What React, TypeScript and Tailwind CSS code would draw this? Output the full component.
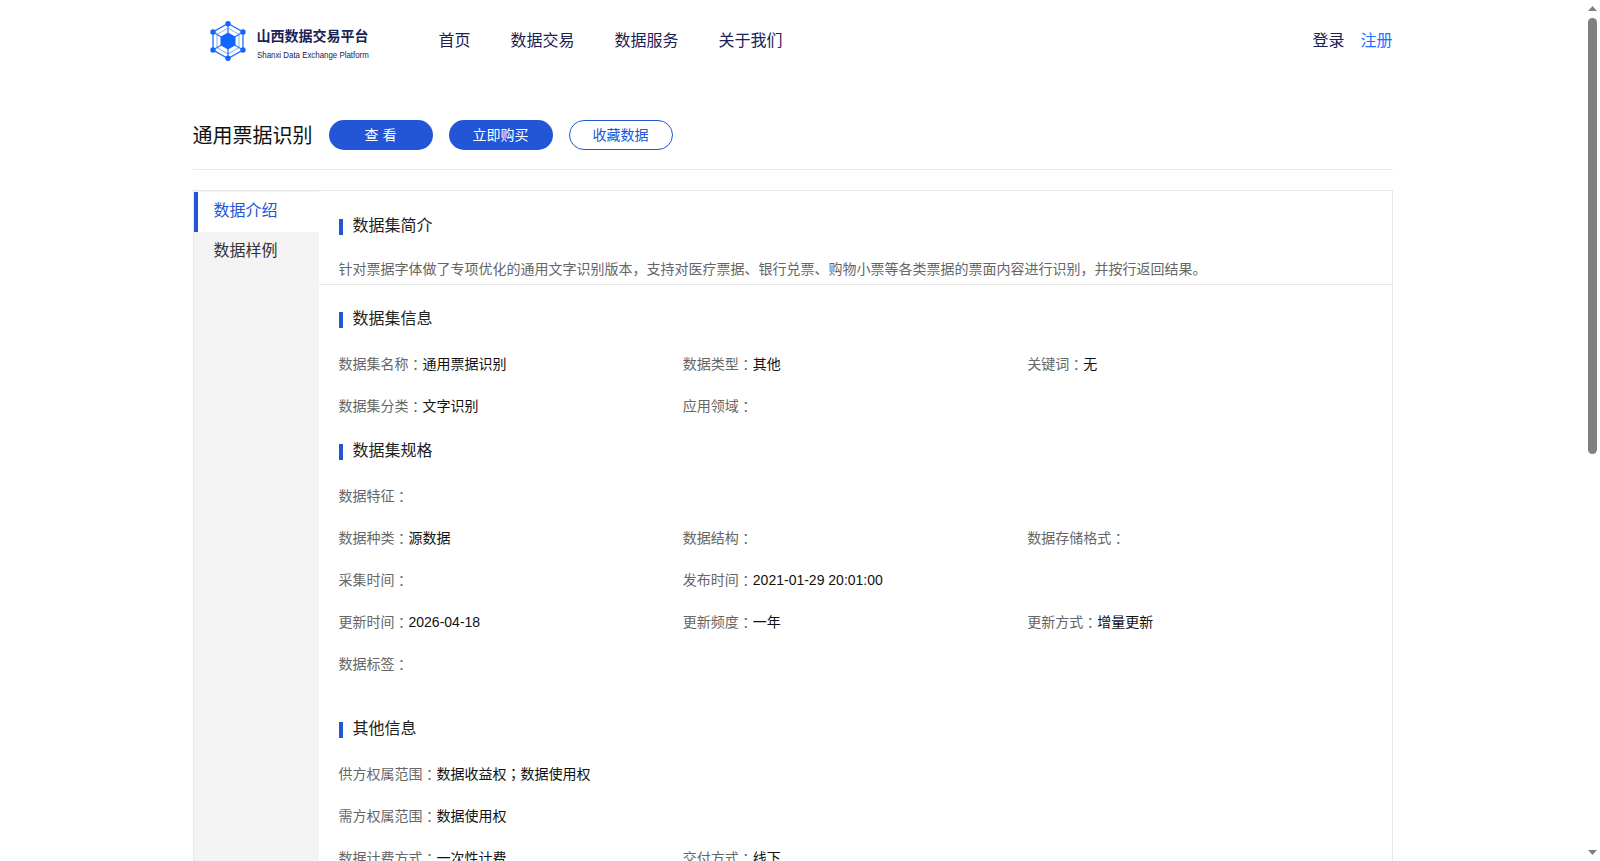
// 全角标点在参考图里居中，用 KR 字形；其余汉字用 SC
const Punct = ({ text }: { text: string }) => (
  <>
    {text.split(/([，、。：；])/).map((part, i) =>
      i % 2 === 1 ? (
        <span key={i} className="font-['Noto_Sans_CJK_KR',sans-serif]">{part}</span>
      ) : (
        part
      )
    )}
  </>
)

const Logo = () => (
  <div className="flex items-center w-[200px] pl-[15px] mt-[2px]">
    <svg width="40" height="40" viewBox="0 0 40 40" className="shrink-0">
      <g stroke="#1f6fff" fill="none">
        <path d="M20 2.5L35 11V29L20 37.5L5 29V11Z" strokeWidth="1.3" />
        <path d="M20 7L31 13.5V26.5L20 33L9 26.5V13.5Z" strokeWidth="0.8" opacity="0.7" />
        <path d="M20 2.5V37.5M5 11L35 29M35 11L5 29" strokeWidth="1.2" />
      </g>
      <g fill="#1264ff">
        <path d="M20 11.5L27.5 15.7V24.3L20 28.5L12.5 24.3V15.7Z" />
        <circle cx="20" cy="2.8" r="2.7" />
        <circle cx="35" cy="11" r="2.7" />
        <circle cx="35" cy="29" r="2.7" />
        <circle cx="20" cy="37.2" r="2.7" />
        <circle cx="5" cy="29" r="2.7" />
        <circle cx="5" cy="11" r="2.7" />
      </g>
    </svg>
    <div className="ml-[9px] mt-1 text-[#1a2156]">
      <div className="text-[14px] leading-[20px] font-bold whitespace-nowrap">山西数据交易平台</div>
      <div className="text-[9.5px] leading-[12px] mt-[3px] whitespace-nowrap origin-left scale-x-[0.83]">Shanxi Data Exchange Platform</div>
    </div>
  </div>
)

const Heading = ({ title, className }: { title: string; className: string }) => (
  <div className={"flex items-center text-[16px] leading-[22px] text-[#222] " + className}>
    <span className="w-1 h-4 bg-[#2256d6] mr-[10px] mt-[2px]" />
    {title}
  </div>
)

const Field = ({ label, value }: { label: string; value?: string }) => (
  <div className="h-[42px] flex items-center text-[14px] text-[#666]">
    <Punct text={label + "："} />
    <span className="text-[#111]">{value && <Punct text={value} />}</span>
  </div>
)

const Scrollbar = () => (
  <div className="w-[15px] shrink-0 bg-white flex flex-col items-center">
    <svg width="9" height="5" viewBox="0 0 9 5" className="mt-[6px] shrink-0">
      <path d="M4.5 0L9 5H0Z" fill="#808080" />
    </svg>
    <div className="w-[9px] h-[436px] mt-[7px] rounded-t-[5px] rounded-b-[5px] bg-[#808080] shrink-0" />
    <svg width="9" height="5" viewBox="0 0 9 5" className="mt-auto mb-[6px] shrink-0">
      <path d="M4.5 5L9 0H0Z" fill="#808080" />
    </svg>
  </div>
)

export default function App() {
  return (
    <div className="h-screen flex overflow-hidden bg-white font-['Liberation_Sans','Noto_Sans_CJK_SC',sans-serif]">
      <div className="flex-1 overflow-hidden">
        <div className="w-[1200px] mx-auto">
          <header className="h-20 flex items-center text-[16px] text-[#1a2156]">
            <Logo />
            <nav className="flex gap-10 ml-[46px] pt-px">
              <a>首页</a>
              <a>数据交易</a>
              <a>数据服务</a>
              <a>关于我们</a>
            </nav>
            <div className="ml-auto flex gap-4 pt-px">
              <a>登录</a>
              <a className="text-[#1f6fff]">注册</a>
            </div>
          </header>

          <div className="mt-10 pb-[19px] border-b border-[#e8e8e8] flex items-center">
            <h1 className="text-[20px] h-[30px] leading-[32px] text-[#111] mr-4">通用票据识别</h1>
            <div className="flex gap-4 text-[14px]">
              <button className="w-[104px] h-[30px] rounded-full bg-[#2256d6] text-white">查 看</button>
              <button className="w-[104px] h-[30px] rounded-full bg-[#2256d6] text-white">立即购买</button>
              <button className="w-[104px] h-[30px] rounded-full border border-[#2256d6] text-[#2256d6]">收藏数据</button>
            </div>
          </div>

          <div className="mt-5 border border-[#e8e8e8] flex min-h-[1400px]">
            <aside className="w-[125px] shrink-0 bg-[#f4f4f4] text-[16px] text-[#333]">
              <div className="h-10 mt-px bg-white border-l-4 border-[#2256d6] pl-4 pb-[2px] flex items-center text-[#2256d6]">数据介绍</div>
              <div className="h-10 pl-5 pb-[2px] flex items-center">数据样例</div>
            </aside>
            <main className="flex-1">
              <div className="h-[94px] px-5 border-b border-[#e8e8e8]">
                <Heading title="数据集简介" className="pt-6" />
                <p className="mt-[21px] text-[14px] text-[#666]">
                  <Punct text="针对票据字体做了专项优化的通用文字识别版本，支持对医疗票据、银行兑票、购物小票等各类票据的票面内容进行识别，并按行返回结果。" />
                </p>
              </div>
              <div className="px-5">
                <Heading title="数据集信息" className="pt-[23px]" />
                <div className="grid grid-cols-3 mt-[13px]">
                  <Field label="数据集名称" value="通用票据识别" />
                  <Field label="数据类型" value="其他" />
                  <Field label="关键词" value="无" />
                  <Field label="数据集分类" value="文字识别" />
                  <Field label="应用领域" />
                </div>
                <Heading title="数据集规格" className="mt-[13px]" />
                <div className="grid grid-cols-3 mt-[13px]">
                  <Field label="数据特征" />
                  <div className="col-span-2" />
                  <Field label="数据种类" value="源数据" />
                  <Field label="数据结构" />
                  <Field label="数据存储格式" />
                  <Field label="采集时间" />
                  <Field label="发布时间" value="2021-01-29 20:01:00" />
                  <div />
                  <Field label="更新时间" value="2026-04-18" />
                  <Field label="更新频度" value="一年" />
                  <Field label="更新方式" value="增量更新" />
                  <Field label="数据标签" />
                </div>
                <Heading title="其他信息" className="mt-[33px]" />
                <div className="grid grid-cols-3 mt-[13px]">
                  <Field label="供方权属范围" value="数据收益权；数据使用权" />
                  <div className="col-span-2" />
                  <Field label="需方权属范围" value="数据使用权" />
                  <div className="col-span-2" />
                  <Field label="数据计费方式" value="一次性计费" />
                  <Field label="交付方式" value="线下" />
                </div>
              </div>
            </main>
          </div>
        </div>
      </div>
      <Scrollbar />
    </div>
  )
}
